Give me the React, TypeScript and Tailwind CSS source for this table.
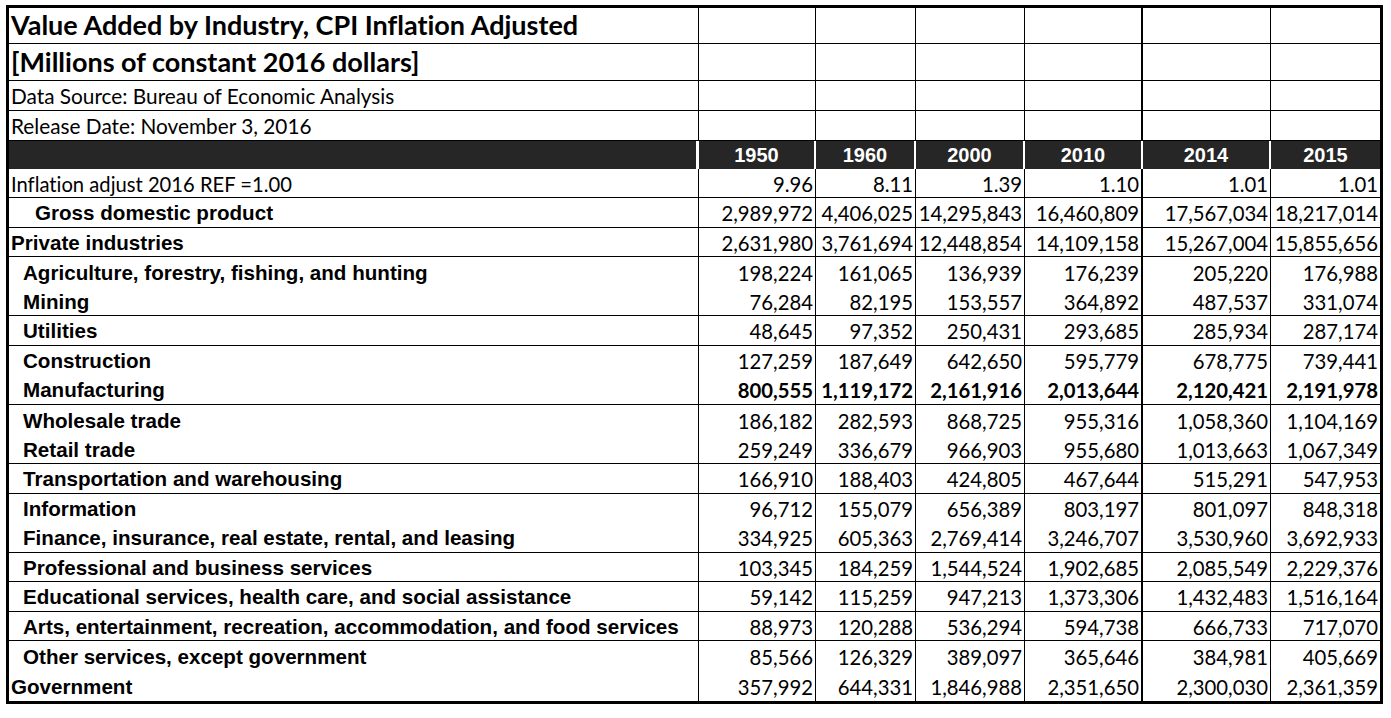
import React from "react";

const colW = ["w-[690px]", "w-[117px]", "w-[100px]", "w-[109px]", "w-[118px]", "w-[128px]", "w-[109px]"];
const colB = ["border-r border-black", "border-r border-black", "border-r border-black", "border-r border-black", "border-r-2 border-black", "border-r border-black", ""];
const headB = ["border-r-[3px] border-white", "border-r-2 border-white", "border-r-2 border-white", "border-r-2 border-white", "border-r-2 border-white", "border-r-2 border-white", ""];

const years = ["1950", "1960", "2000", "2010", "2014", "2015"];

type Row = {
  label: string;
  pad: string;
  labelFont: string;
  values: string[];
  line: boolean;
  h: string;
  bold?: boolean;
};

const arial = "font-['Liberation_Sans',Arial,sans-serif] font-bold text-[20.6px]";
const calibri = "font-['Lato','Open_Sans',sans-serif] text-[20.2px]";

const rows: Row[] = [
  { label: "Inflation adjust 2016 REF =1.00", pad: "pl-[2px]", labelFont: calibri, values: ["9.96", "8.11", "1.39", "1.10", "1.01", "1.01"], line: true, h: "h-[29px]" },
  { label: "Gross domestic product", pad: "pl-[26px]", labelFont: arial, values: ["2,989,972", "4,406,025", "14,295,843", "16,460,809", "17,567,034", "18,217,014"], line: true, h: "h-[30px]" },
  { label: "Private industries", pad: "pl-[2px]", labelFont: arial, values: ["2,631,980", "3,761,694", "12,448,854", "14,109,158", "15,267,004", "15,855,656"], line: true, h: "h-[29px]" },
  { label: "Agriculture, forestry, fishing, and hunting", pad: "pl-[14px]", labelFont: arial, values: ["198,224", "161,065", "136,939", "176,239", "205,220", "176,988"], line: false, h: "h-[30px]" },
  { label: "Mining", pad: "pl-[14px]", labelFont: arial, values: ["76,284", "82,195", "153,557", "364,892", "487,537", "331,074"], line: true, h: "h-[29px]" },
  { label: "Utilities", pad: "pl-[14px]", labelFont: arial, values: ["48,645", "97,352", "250,431", "293,685", "285,934", "287,174"], line: true, h: "h-[30px]" },
  { label: "Construction", pad: "pl-[14px]", labelFont: arial, values: ["127,259", "187,649", "642,650", "595,779", "678,775", "739,441"], line: false, h: "h-[29px]" },
  { label: "Manufacturing", pad: "pl-[14px]", labelFont: arial, values: ["800,555", "1,119,172", "2,161,916", "2,013,644", "2,120,421", "2,191,978"], line: true, h: "h-[30px]", bold: true },
  { label: "Wholesale trade", pad: "pl-[14px]", labelFont: arial, values: ["186,182", "282,593", "868,725", "955,316", "1,058,360", "1,104,169"], line: false, h: "h-[30px]" },
  { label: "Retail trade", pad: "pl-[14px]", labelFont: arial, values: ["259,249", "336,679", "966,903", "955,680", "1,013,663", "1,067,349"], line: true, h: "h-[29px]" },
  { label: "Transportation and warehousing", pad: "pl-[14px]", labelFont: arial, values: ["166,910", "188,403", "424,805", "467,644", "515,291", "547,953"], line: true, h: "h-[30px]" },
  { label: "Information", pad: "pl-[14px]", labelFont: arial, values: ["96,712", "155,079", "656,389", "803,197", "801,097", "848,318"], line: false, h: "h-[29px]" },
  { label: "Finance, insurance, real estate, rental, and leasing", pad: "pl-[14px]", labelFont: arial, values: ["334,925", "605,363", "2,769,414", "3,246,707", "3,530,960", "3,692,933"], line: true, h: "h-[30px]" },
  { label: "Professional and business services", pad: "pl-[14px]", labelFont: arial, values: ["103,345", "184,259", "1,544,524", "1,902,685", "2,085,549", "2,229,376"], line: true, h: "h-[29px]" },
  { label: "Educational services, health care, and social assistance", pad: "pl-[14px]", labelFont: arial, values: ["59,142", "115,259", "947,213", "1,373,306", "1,432,483", "1,516,164"], line: true, h: "h-[30px]" },
  { label: "Arts, entertainment, recreation, accommodation, and food services", pad: "pl-[14px]", labelFont: arial, values: ["88,973", "120,288", "536,294", "594,738", "666,733", "717,070"], line: true, h: "h-[29px]" },
  { label: "Other services, except government", pad: "pl-[14px]", labelFont: arial, values: ["85,566", "126,329", "389,097", "365,646", "384,981", "405,669"], line: false, h: "h-[30px]" },
  { label: "Government", pad: "pl-[2px]", labelFont: arial, values: ["357,992", "644,331", "1,846,988", "2,351,650", "2,300,030", "2,361,359"], line: false, h: "h-[30px]" },
];

function TitleRow({ text, h, font }: { text: string; h: string; font: string }) {
  return (
    <div className={`flex ${h} border-b border-black`}>
      <div className={`${colW[0]} ${colB[0]} flex items-center pl-[2px] whitespace-nowrap ${font}`}>{text}</div>
      {years.map((y, i) => (
        <div key={y} className={`${colW[i + 1]} ${colB[i + 1]}`} />
      ))}
    </div>
  );
}

export default function App() {
  return (
    <div className="min-h-[718px] bg-white pt-[5px] pl-[6px] text-black [font-variant-ligatures:none]">
      <div className="w-[1377px] border-[3px] border-black">
        <TitleRow text="Value Added by Industry, CPI Inflation Adjusted" h="h-[36px]" font="font-['Lato',sans-serif] font-bold text-[27px]" />
        <TitleRow text="[Millions of constant 2016 dollars]" h="h-[37px]" font="font-['Lato',sans-serif] font-bold text-[27px]" />
        <TitleRow text="Data Source: Bureau of Economic Analysis" h="h-[30px]" font="font-['Lato',sans-serif] text-[20.8px]" />
        <TitleRow text="Release Date: November 3, 2016" h="h-[30px]" font="font-['Lato',sans-serif] text-[20.8px]" />

        <div className="flex h-[28px] bg-white">
          <div className={`${colW[0]} ${headB[0]} bg-[#262626]`} />
          {years.map((y, i) => (
            <div
              key={y}
              className={`${colW[i + 1]} ${headB[i + 1]} bg-[#262626] bg-clip-padding flex items-center justify-center font-['Liberation_Sans',Arial,sans-serif] font-bold text-[20px] text-white`}
            >
              {y}
            </div>
          ))}
        </div>

        {rows.map((r) => (
          <div key={r.label} className={`flex ${r.h} ${r.line ? "border-b border-black" : ""}`}>
            <div className={`${colW[0]} ${colB[0]} ${r.pad} ${r.labelFont} flex items-center pt-[2px] whitespace-nowrap leading-none`}>
              {r.label}
            </div>
            {r.values.map((v, i) => (
              <div
                key={i}
                className={`${colW[i + 1]} ${colB[i + 1]} flex items-center justify-end pr-[2px] pt-[2px] font-['Lato','Open_Sans',sans-serif] text-[20.3px] leading-none ${r.bold ? "font-bold" : ""}`}
              >
                {v}
              </div>
            ))}
          </div>
        ))}
      </div>
    </div>
  );
}
